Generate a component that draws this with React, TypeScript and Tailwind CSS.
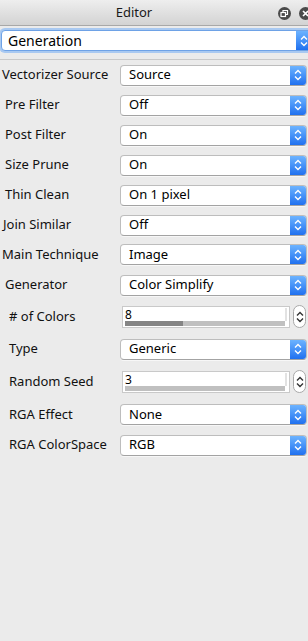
import React from 'react';

const font = { fontFamily: '"Noto Sans", "DejaVu Sans", sans-serif' };

function Chevrons({ color = 'white' }: { color?: string }) {
  return (
    <svg width="8" height="12" viewBox="0 0 8 12" fill="none" stroke={color} strokeWidth="1.4" aria-hidden>
      <path d="M1 4.5 L4 1.5 L7 4.5" />
      <path d="M1 7.5 L4 10.5 L7 7.5" />
    </svg>
  );
}

function Select({ value, focused = false }: { value: string; focused?: boolean }) {
  return (
    <div
      className={`flex h-[21px] flex-1 items-stretch rounded-[4px] bg-white ${
        focused
          ? 'border border-[#6ea2e6] shadow-[0_0_0_2px_#a9c9f1]'
          : 'border border-[#bdbdbd] border-b-[#a3a3a3] shadow-[0_1px_0_#f7f7f7]'
      }`}
    >
      <div className={`flex flex-1 items-center ${focused ? 'pl-[6px] text-[14px]' : 'pl-2 text-[13px]'} text-black`}>{value}</div>
      <div className="flex w-[16px] items-center justify-center rounded-r-[3px] bg-gradient-to-b from-[#6cb3ff] to-[#1f70ef]">
        <Chevrons />
      </div>
    </div>
  );
}

function NumberField({ value, fill }: { value: string; fill: number }) {
  return (
    <div className="flex flex-1 items-center">
      <div className="ml-[2px] flex h-[22px] flex-1 flex-col border border-[#c9c9c9] bg-white px-[2px] pt-[1px]">
        <div className="flex flex-1">
          <div className="flex-1 text-[12px] leading-[13px] text-black">{value}</div>
          <div className="w-[2px] bg-[#e2e2e2]" />
        </div>
        <div className="mb-[1px] mr-[2px] flex h-[5px] bg-[#c0c0c0]">
          <div className="h-full bg-[#858585]" style={{ width: `${fill}%` }} />
        </div>
      </div>
      <div className="ml-[3px] mr-[1px] flex h-[23px] w-[13px] items-center justify-center rounded-full border border-[#a9a9a9] bg-white">
        <Chevrons color="#333" />
      </div>
    </div>
  );
}

function Row({ label, pl, h, children }: { label: string; pl: string; h: string; children: React.ReactNode }) {
  return (
    <div className={`flex items-center ${h}`}>
      <div className={`w-[120px] shrink-0 text-[13px] text-[#111] ${pl}`}>{label}</div>
      <div className="flex flex-1 pr-[1px]">{children}</div>
    </div>
  );
}

export default function App() {
  return (
    <div className="h-[641px] w-[308px] overflow-hidden bg-[#ebebeb]" style={font}>
      <div className="relative flex h-[26px] items-center border-b border-[#a8a8a8] bg-gradient-to-b from-[#eeeeee] to-[#d3d3d3]">
        <div className="w-[268px] text-center text-[13px] text-[#1a1a1a]">Editor</div>
        <div className="absolute left-[278px] top-[7px] flex h-[13px] w-[13px] items-center justify-center rounded-full bg-[#4a4a4a]">
          <svg width="9" height="9" viewBox="0 0 9 9" fill="none" stroke="white" strokeWidth="1.2" aria-hidden>
            <rect x="1" y="3.5" width="4.5" height="4" />
            <path d="M3 3.5 V1.5 H7.5 V5.5 H5.5" />
          </svg>
        </div>
        <div className="absolute left-[299px] top-[7px] flex h-[13px] w-[13px] items-center justify-center rounded-full bg-[#4a4a4a]">
          <svg width="7" height="7" viewBox="0 0 7 7" stroke="white" strokeWidth="1.6" aria-hidden>
            <path d="M1 1 L6 6 M6 1 L1 6" />
          </svg>
        </div>
      </div>
      <div className="flex w-[313px] pl-[1px] pt-[4px]">
        <div className="flex h-[22px] flex-1">
          <Select value="Generation" focused />
        </div>
      </div>
      <div className="mt-[7px] h-px bg-[#c9c9c9]" />
      <div className="flex flex-col">
        <Row label="Vectorizer Source" pl="pl-[2px]" h="h-[30px]"><Select value="Source" /></Row>
        <Row label="Pre Filter" pl="pl-[5px]" h="h-[30px]"><Select value="Off" /></Row>
        <Row label="Post Filter" pl="pl-[5px]" h="h-[30px]"><Select value="On" /></Row>
        <Row label="Size Prune" pl="pl-[5px]" h="h-[30px]"><Select value="On" /></Row>
        <Row label="Thin Clean" pl="pl-[5px]" h="h-[30px]"><Select value="On 1 pixel" /></Row>
        <Row label="Join Similar" pl="pl-[3px]" h="h-[30px]"><Select value="Off" /></Row>
        <Row label="Main Technique" pl="pl-[2px]" h="h-[29px]"><Select value="Image" /></Row>
        <Row label="Generator" pl="pl-[5px]" h="h-[32px]"><Select value="Color Simplify" /></Row>
        <Row label="# of Colors" pl="pl-[9px]" h="h-[31px]"><NumberField value="8" fill={36} /></Row>
        <Row label="Type" pl="pl-[9px]" h="h-[34px]"><Select value="Generic" /></Row>
        <Row label="Random Seed" pl="pl-[9px]" h="h-[31px]"><NumberField value="3" fill={0} /></Row>
        <Row label="RGA Effect" pl="pl-[9px]" h="h-[35px]"><Select value="None" /></Row>
        <Row label="RGA ColorSpace" pl="pl-[9px]" h="h-[26px]"><Select value="RGB" /></Row>
      </div>
    </div>
  );
}
